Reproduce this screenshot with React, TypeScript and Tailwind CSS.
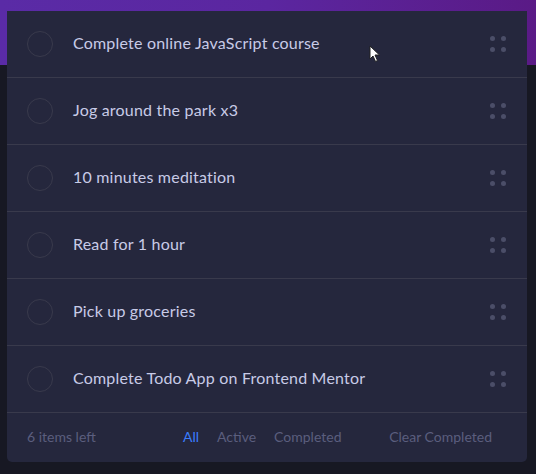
import React from "react";

const todos = [
  "Complete online JavaScript course",
  "Jog around the park x3",
  "10 minutes meditation",
  "Read for 1 hour",
  "Pick up groceries",
  "Complete Todo App on Frontend Mentor",
];

function DragHandle() {
  return (
    <div className="grid grid-cols-2 gap-x-[6px] gap-y-[6px]">
      {[...Array(4)].map((_, i) => (
        <span key={i} className="w-[5px] h-[5px] rounded-full bg-[#4b4e68]" />
      ))}
    </div>
  );
}

export default function App() {
  return (
    <div
      className="min-h-[474px] bg-[#171823] relative"
      style={{ fontFamily: "Lato, 'Noto Sans', sans-serif" }}
    >
      {/* purple header band */}
      <div className="h-[65px] bg-gradient-to-r from-[#5a2ba6] via-[#5b26a0] to-[#5a1a86]" />

      <div className="-mt-[54px] mx-[7px] w-[520px] bg-[#25273d] rounded-b-[5px] relative">
        {todos.map((t) => (
          <div
            key={t}
            className="h-[67px] flex items-center pl-[20px] pr-[21px] border-b border-[#393a4c]"
          >
            <span className="w-[26px] h-[26px] rounded-full border-[1.5px] border-[#393a4c] shrink-0" />
            <span className="ml-[20px] mb-[3px] text-[16px] text-[#c8cbe7] tracking-[0.2px] flex-1">
              {t}
            </span>
            <DragHandle />
          </div>
        ))}

        {/* footer */}
        <div className="h-[49px] flex items-center pl-[20px] pr-[35px] pb-[2px] text-[14px] text-[#5b5e7e]">
          <span className="w-[156px]">6 items left</span>
          <div className="flex gap-[18px]">
            <span className="text-[#3a7cfd]">All</span>
            <span>Active</span>
            <span>Completed</span>
          </div>
          <span className="ml-auto">Clear Completed</span>
        </div>

        {/* mouse cursor */}
        <svg
          className="absolute left-[362px] top-[34px]"
          width="12"
          height="18"
          viewBox="0 0 12 18"
        >
          <path
            d="M1 1 L1 14 L4 11 L6.5 16.5 L8.5 15.5 L6 10 L10.5 10 Z"
            fill="#ffffff"
            stroke="#222"
            strokeWidth="1"
          />
        </svg>
      </div>
    </div>
  );
}
